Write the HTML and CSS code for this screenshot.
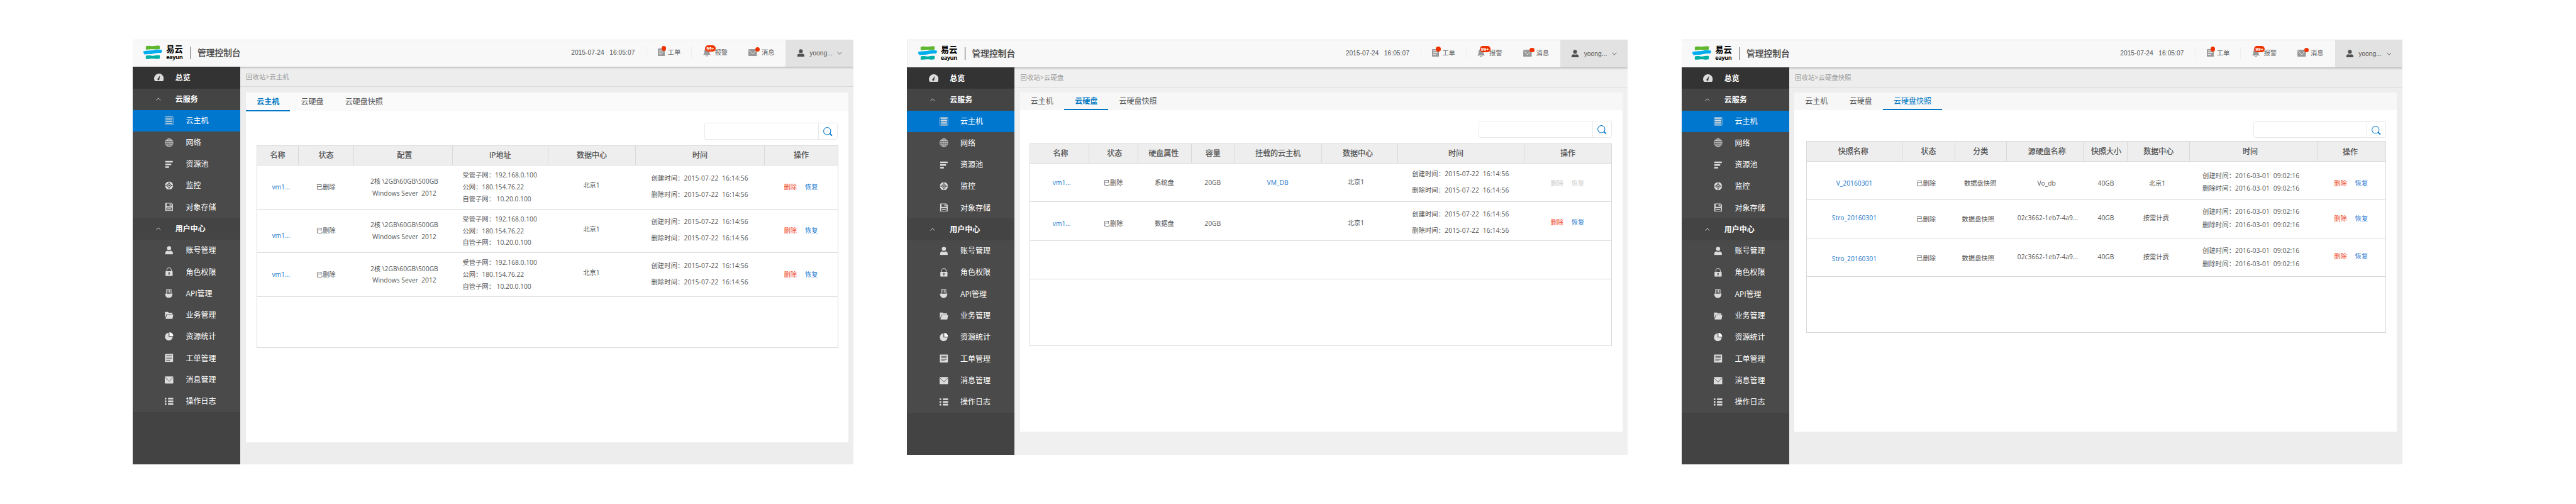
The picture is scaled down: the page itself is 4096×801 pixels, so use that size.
FILE: index.html
```
<!DOCTYPE html>
<html lang="zh-CN">
<head>
<meta charset="utf-8">
<title>易云 管理控制台</title>
<link rel="stylesheet" href="styles.css">
</head>
<body>
<svg class="defs" width="0" height="0" aria-hidden="true">
  <symbol id="logo" viewBox="0 0 35 26">
    <path fill="#5fb62f" d="M4.5 2.2C9-.4 13 1.6 18 1.3c5-.2 9-1.6 12.500-.2v5.600c-5 1.200-8 .6-12.500 .5-5-.1-9 .6-13.500 .6z"/>
    <path fill="#00aeef" d="M0 11.200c6-2.200 11-1 17-2 6-.9 12-2.200 18-.2-.3 2.500-.6 4.500-2.500 5.200-6-.8-10 .6-15.500 1.400-5.500 .9-9.500 .4-15 1.200C.5 15.500 0 13.500 0 11.200z"/>
    <path fill="#00b0a6" d="M4.500 19.500c5-1.800 9 .2 14-.1 4.500-.3 8-1.600 12-.6v5.700c-5 1.600-8 .3-13 .2-5 0-8.500 1.200-13 .6z"/>
  </symbol>
  <symbol id="gauge" viewBox="0 0 18 14"><path fill="currentColor" fill-rule="evenodd" d="M1.500 14A9 9 0 1 1 16.500 14zM11.200 2.800L7.600 8.600a1.800 1.800 0 1 0 2.200 1.200z"/></symbol>
  <symbol id="up" viewBox="0 0 9 6"><path fill="none" stroke="currentColor" d="M.4 5.400L4.500 1 8.600 5.400"/></symbol>
  <symbol id="down" viewBox="0 0 9 6"><path fill="none" stroke="currentColor" d="M.4 .6L4.500 5 8.600 .6"/></symbol>
  <symbol id="server" viewBox="0 0 16 16"><rect x=".5" y=".5" width="15" height="15" rx="1.500" fill="none" stroke="currentColor"/><path stroke="currentColor" stroke-width="1.800" stroke-linecap="round" d="M2.800 3.200h10.400M2.800 6.400h10.400M2.800 9.600h10.400M2.800 12.800h10.400"/></symbol>
  <symbol id="globe" viewBox="0 0 16 16"><g fill="none" stroke="currentColor"><circle cx="8" cy="8" r="7.400"/><ellipse cx="8" cy="8" rx="3.800" ry="7.400"/><path d="M8 .5v15M.5 8h15M1.800 4.200h12.400M1.800 11.800h12.400"/></g></symbol>
  <symbol id="pool" viewBox="0 0 16 16"><path fill="currentColor" d="M1.500 2h13a.5.5 0 0 1 .5.500v2a.5.5 0 0 1-.5.500h-13a.5.5 0 0 1-.5-.5v-2a.5.5 0 0 1 .5-.5zM1 7h11v3H1zM1 12h7v3H1z"/></symbol>
  <symbol id="monitor" viewBox="0 0 16 16"><circle cx="8" cy="8" r="5.400" fill="none" stroke="currentColor" stroke-width="4.200"/><path stroke="#4a4a4a" d="M8 0v4M8 12v4M0 8h4M12 8h4"/><path fill="currentColor" stroke="#4a4a4a" stroke-width="1.200" d="M8 3.600L12.400 8 8 12.400 3.600 8z"/><circle cx="8" cy="8" r="1.500" fill="#4a4a4a"/></symbol>
  <symbol id="disk" viewBox="0 0 16 16"><path fill="currentColor" fill-rule="evenodd" d="M2 .5h10.500L15 3v11.500a1 1 0 0 1-1 1H2a1 1 0 0 1-1-1v-13a1 1 0 0 1 1-1zM3.500 1.800v4.900h9V1.800zM3 9v5.200h10V9z"/><path fill="currentColor" d="M9 2.300h2.200v3.200H9zM4.500 10.800h7v1.600h-7z"/></symbol>
  <symbol id="user" viewBox="0 0 16 16"><circle cx="8" cy="4.200" r="3.800" fill="currentColor"/><path fill="currentColor" d="M1 15.500v-2.800c0-2.500 2.500-4 4.300-3.800 1.600.9 3.800.9 5.400 0 1.800-.2 4.300 1.300 4.300 3.800v2.800z"/></symbol>
  <symbol id="lock" viewBox="0 0 16 17"><path fill="none" stroke="currentColor" stroke-width="1.200" d="M3.600 8V5a4.400 4.400 0 0 1 8.800 0v3"/><path fill="currentColor" fill-rule="evenodd" d="M1.800 7.500h12.400a.8.8 0 0 1 .8.8v7.900a.8.8 0 0 1-.8.8H1.800a.8.8 0 0 1-.8-.8V8.300a.8.8 0 0 1 .8-.8zM8 9.600a1.600 1.600 0 0 0-.7 3V15h1.400v-2.400a1.600 1.600 0 0 0-.7-3z"/></symbol>
  <symbol id="api" viewBox="0 0 16 16"><path fill="none" stroke="currentColor" stroke-width="1.200" d="M3.200 9V.6h8.600V9M6 .6v5.400M9 .6v5.400"/><path fill="currentColor" d="M.5 8h14a7 8 0 0 1-14 0z"/></symbol>
  <symbol id="folder" viewBox="0 0 16 16"><path fill="currentColor" d="M.5 14V2h5.500l1.500 1.500H14V6H3.500z"/><path fill="currentColor" d="M4.200 6.800H16L14.200 15H1.500z"/></symbol>
  <symbol id="pie" viewBox="0 0 16 16"><path fill="currentColor" d="M7.200 1v7.600h7.600A7.200 7.200 0 1 1 7.200 1z"/><path fill="#fff" d="M8.600 0A7.200 7.200 0 0 1 15.800 7.200H8.600z"/></symbol>
  <symbol id="doc" viewBox="0 0 16 16"><path fill="currentColor" fill-rule="evenodd" d="M1.500 .5h13a1 1 0 0 1 1 1v13a1 1 0 0 1-1 1h-13a1 1 0 0 1-1-1v-13a1 1 0 0 1 1-1zM2.800 3.200v1.100h10.400V3.200zM2.800 6v1.100h10.400V6zM2.800 8.800v1.100h10.400V8.800zM2.800 11.800v1.100h7.200v-1.100z"/></symbol>
  <symbol id="mail" viewBox="0 0 16 13"><rect width="16" height="13" rx="1" fill="currentColor"/><path class="flap" fill="none" stroke-width=".9" d="M.6 1.200L8 9.300l7.400-8.100"/></symbol>
  <symbol id="list" viewBox="0 0 16 14"><path fill="currentColor" d="M0 .5h3v3H0zM0 5.500h3v3H0zM0 10.500h3v3H0zM6 .5h10v3H6zM6 5.500h10v3H6zM6 10.500h10v3H6z"/></symbol>
  <symbol id="order" viewBox="0 0 13 14"><path fill="currentColor" fill-rule="evenodd" d="M1 0h11l1 1v12a1 1 0 0 1-1 1H1a1 1 0 0 1-1-1V1zM2 2.600v1.300h8V2.600zM2 6v1.300h8V6zM2 9.500v1.300h6V9.500z"/></symbol>
  <symbol id="bell" viewBox="0 0 14 15"><path fill="currentColor" d="M7 0c3.500 0 4.700 2.800 4.700 5.500 0 3.300.8 5 2.300 6.500H0c1.500-1.500 2.300-3.200 2.300-6.500C2.300 2.800 3.500 0 7 0zM4.500 13h5A2.500 2 0 0 1 4.500 13z"/></symbol>
  <symbol id="search" viewBox="0 0 17 17"><circle cx="7.300" cy="7.300" r="6.600" fill="none" stroke="currentColor" stroke-width="1.200"/><path stroke="currentColor" stroke-width="2.200" d="M11.800 11.800l4.600 4.300"/></symbol>
</svg>

<main class="board">
  <section class="screen screen-host">
    <header class="top">
      <svg class="logo"><use href="#logo"/></svg>
      <div class="brand"><b>易云</b><i>eayun</i></div>
      <h1 class="product">管理控制台</h1>
      <time class="clock">2015-07-24   16:05:07</time>
      <a class="tool tool-order"><svg class="i-order"><use href="#order"/></svg><em class="dot"></em>工单</a>
      <a class="tool tool-bell"><svg class="i-bell"><use href="#bell"/></svg><em class="count">99+</em>报警</a>
      <a class="tool tool-mail"><svg class="i-mail"><use href="#mail"/></svg><em class="dot"></em>消息</a>
      <a class="account"><svg class="i-user"><use href="#user"/></svg>yoong...<svg class="i-down"><use href="#down"/></svg></a>
    </header>
    <div class="body">
      <nav class="side">
        <a class="home"><svg class="i-gauge"><use href="#gauge"/></svg>总览</a>
        <a class="group"><svg class="i-up"><use href="#up"/></svg>云服务</a>
        <a class="item active"><svg><use href="#server"/></svg>云主机</a>
        <a class="item"><svg><use href="#globe"/></svg>网络</a>
        <a class="item"><svg><use href="#pool"/></svg>资源池</a>
        <a class="item"><svg><use href="#monitor"/></svg>监控</a>
        <a class="item"><svg><use href="#disk"/></svg>对象存储</a>
        <a class="group"><svg class="i-up"><use href="#up"/></svg>用户中心</a>
        <a class="item"><svg><use href="#user"/></svg>账号管理</a>
        <a class="item"><svg><use href="#lock"/></svg>角色权限</a>
        <a class="item"><svg><use href="#api"/></svg>API管理</a>
        <a class="item"><svg><use href="#folder"/></svg>业务管理</a>
        <a class="item"><svg><use href="#pie"/></svg>资源统计</a>
        <a class="item"><svg><use href="#doc"/></svg>工单管理</a>
        <a class="item"><svg><use href="#mail"/></svg>消息管理</a>
        <a class="item"><svg><use href="#list"/></svg>操作日志</a>
      </nav>
      <div class="content">
        <div class="crumb">回收站&gt;云主机</div>
        <div class="card">
          <div class="tabs"><a class="tab on">云主机</a><a class="tab">云硬盘</a><a class="tab">云硬盘快照</a></div>
          <div class="search"><span class="field"></span><span class="go"><svg><use href="#search"/></svg></span></div>
          <div class="table">
            <div class="row head"><span>名称</span><span>状态</span><span class="r3">配置</span><span>IP地址</span><span>数据中心</span><span class="u1">时间</span><span>操作</span></div>
            <div class="row">
              <span class="link r6">vm1...</span><span>已删除</span>
              <span class="r3 spec"><span>2核 \2GB\60GB\500GB<br>Windows Sever&nbsp; 2012</span></span>
              <span class="ips"><span>受管子网<i class="c">：</i>192.168.0.100<br>公网<i class="c">：</i>180.154.76.22<br>自管子网<i class="c">：</i> 10.20.0.100</span></span>
              <span class="u3">北京1</span>
              <span class="when u1"><span>创建时间<i class="c">：</i>2015-07-22&nbsp; 16:14:56<br>删除时间<i class="c">：</i>2015-07-22&nbsp; 16:14:56</span></span>
              <span class="acts"><a class="del">删除</a><a class="link">恢复</a></span>
            </div>
            <div class="row">
              <span class="link r6 d9">vm1...</span><span>已删除</span>
              <span class="r3 spec"><span>2核 \2GB\60GB\500GB<br>Windows Sever&nbsp; 2012</span></span>
              <span class="ips"><span>受管子网<i class="c">：</i>192.168.0.100<br>公网<i class="c">：</i>180.154.76.22<br>自管子网<i class="c">：</i> 10.20.0.100</span></span>
              <span class="u3">北京1</span>
              <span class="when u1"><span>创建时间<i class="c">：</i>2015-07-22&nbsp; 16:14:56<br>删除时间<i class="c">：</i>2015-07-22&nbsp; 16:14:56</span></span>
              <span class="acts"><a class="del">删除</a><a class="link">恢复</a></span>
            </div>
            <div class="row">
              <span class="link r6">vm1...</span><span>已删除</span>
              <span class="r3 spec"><span>2核 \2GB\60GB\500GB<br>Windows Sever&nbsp; 2012</span></span>
              <span class="ips"><span>受管子网<i class="c">：</i>192.168.0.100<br>公网<i class="c">：</i>180.154.76.22<br>自管子网<i class="c">：</i> 10.20.0.100</span></span>
              <span class="u3">北京1</span>
              <span class="when u1"><span>创建时间<i class="c">：</i>2015-07-22&nbsp; 16:14:56<br>删除时间<i class="c">：</i>2015-07-22&nbsp; 16:14:56</span></span>
              <span class="acts"><a class="del">删除</a><a class="link">恢复</a></span>
            </div>
          </div>
        </div>
      </div>
    </div>
  </section>

  <section class="screen screen-disk">
    <header class="top">
      <svg class="logo"><use href="#logo"/></svg>
      <div class="brand"><b>易云</b><i>eayun</i></div>
      <h1 class="product">管理控制台</h1>
      <time class="clock">2015-07-24   16:05:07</time>
      <a class="tool tool-order"><svg class="i-order"><use href="#order"/></svg><em class="dot"></em>工单</a>
      <a class="tool tool-bell"><svg class="i-bell"><use href="#bell"/></svg><em class="count">99+</em>报警</a>
      <a class="tool tool-mail"><svg class="i-mail"><use href="#mail"/></svg><em class="dot"></em>消息</a>
      <a class="account"><svg class="i-user"><use href="#user"/></svg>yoong...<svg class="i-down"><use href="#down"/></svg></a>
    </header>
    <div class="body">
      <nav class="side">
        <a class="home"><svg class="i-gauge"><use href="#gauge"/></svg>总览</a>
        <a class="group"><svg class="i-up"><use href="#up"/></svg>云服务</a>
        <a class="item active"><svg><use href="#server"/></svg>云主机</a>
        <a class="item"><svg><use href="#globe"/></svg>网络</a>
        <a class="item"><svg><use href="#pool"/></svg>资源池</a>
        <a class="item"><svg><use href="#monitor"/></svg>监控</a>
        <a class="item"><svg><use href="#disk"/></svg>对象存储</a>
        <a class="group"><svg class="i-up"><use href="#up"/></svg>用户中心</a>
        <a class="item"><svg><use href="#user"/></svg>账号管理</a>
        <a class="item"><svg><use href="#lock"/></svg>角色权限</a>
        <a class="item"><svg><use href="#api"/></svg>API管理</a>
        <a class="item"><svg><use href="#folder"/></svg>业务管理</a>
        <a class="item"><svg><use href="#pie"/></svg>资源统计</a>
        <a class="item"><svg><use href="#doc"/></svg>工单管理</a>
        <a class="item"><svg><use href="#mail"/></svg>消息管理</a>
        <a class="item"><svg><use href="#list"/></svg>操作日志</a>
      </nav>
      <div class="content">
        <div class="crumb">回收站&gt;云硬盘</div>
        <div class="card">
          <div class="tabs"><a class="tab">云主机</a><a class="tab on">云硬盘</a><a class="tab">云硬盘快照</a></div>
          <div class="search"><span class="field"></span><span class="go"><svg><use href="#search"/></svg></span></div>
          <div class="table">
            <div class="row head"><span class="r2">名称</span><span class="r2">状态</span><span class="l2">硬盘属性</span><span>容量</span><span>挂载的云主机</span><span class="l3">数据中心</span><span class="l9">时间</span><span>操作</span></div>
            <div class="row">
              <span class="link r4">vm1...</span><span>已删除</span><span>系统盘</span><span>20GB</span><span class="link">VM_DB</span>
              <span class="l6 u1">北京1</span>
              <span class="when u1"><span>创建时间<i class="c">：</i>2015-07-22&nbsp; 16:14:56<br>删除时间<i class="c">：</i>2015-07-22&nbsp; 16:14:56</span></span>
              <span class="acts off d1"><a>删除</a><a>恢复</a></span>
            </div>
            <div class="row">
              <span class="link r4 d5">vm1...</span><span class="d5">已删除</span><span class="d5">数据盘</span><span class="d5">20GB</span><span></span>
              <span class="l6 d4">北京1</span>
              <span class="when d3"><span>创建时间<i class="c">：</i>2015-07-22&nbsp; 16:14:56<br>删除时间<i class="c">：</i>2015-07-22&nbsp; 16:14:56</span></span>
              <span class="acts d2"><a class="del">删除</a><a class="link">恢复</a></span>
            </div>
            <div class="row"></div>
          </div>
        </div>
      </div>
    </div>
  </section>

  <section class="screen screen-snap">
    <header class="top">
      <svg class="logo"><use href="#logo"/></svg>
      <div class="brand"><b>易云</b><i>eayun</i></div>
      <h1 class="product">管理控制台</h1>
      <time class="clock">2015-07-24   16:05:07</time>
      <a class="tool tool-order"><svg class="i-order"><use href="#order"/></svg><em class="dot"></em>工单</a>
      <a class="tool tool-bell"><svg class="i-bell"><use href="#bell"/></svg><em class="count">99+</em>报警</a>
      <a class="tool tool-mail"><svg class="i-mail"><use href="#mail"/></svg><em class="dot"></em>消息</a>
      <a class="account"><svg class="i-user"><use href="#user"/></svg>yoong...<svg class="i-down"><use href="#down"/></svg></a>
    </header>
    <div class="body">
      <nav class="side">
        <a class="home"><svg class="i-gauge"><use href="#gauge"/></svg>总览</a>
        <a class="group"><svg class="i-up"><use href="#up"/></svg>云服务</a>
        <a class="item active"><svg><use href="#server"/></svg>云主机</a>
        <a class="item"><svg><use href="#globe"/></svg>网络</a>
        <a class="item"><svg><use href="#pool"/></svg>资源池</a>
        <a class="item"><svg><use href="#monitor"/></svg>监控</a>
        <a class="item"><svg><use href="#disk"/></svg>对象存储</a>
        <a class="group"><svg class="i-up"><use href="#up"/></svg>用户中心</a>
        <a class="item"><svg><use href="#user"/></svg>账号管理</a>
        <a class="item"><svg><use href="#lock"/></svg>角色权限</a>
        <a class="item"><svg><use href="#api"/></svg>API管理</a>
        <a class="item"><svg><use href="#folder"/></svg>业务管理</a>
        <a class="item"><svg><use href="#pie"/></svg>资源统计</a>
        <a class="item"><svg><use href="#doc"/></svg>工单管理</a>
        <a class="item"><svg><use href="#mail"/></svg>消息管理</a>
        <a class="item"><svg><use href="#list"/></svg>操作日志</a>
      </nav>
      <div class="content">
        <div class="crumb">回收站&gt;云硬盘快照</div>
        <div class="card">
          <div class="tabs"><a class="tab">云主机</a><a class="tab">云硬盘</a><a class="tab on">云硬盘快照</a></div>
          <div class="search"><span class="field"></span><span class="go"><svg><use href="#search"/></svg></span></div>
          <div class="table">
            <div class="row head"><span class="l2">快照名称</span><span>状态</span><span>分类</span><span class="r4">源硬盘名称</span><span class="r2">快照大小</span><span>数据中心</span><span class="l6">时间</span><span class="l2 d1">操作</span></div>
            <div class="row">
              <span class="link d6">V_20160301</span><span class="l4 d5">已删除</span><span class="d6">数据盘快照</span><span class="r4 d5">Vo_db</span><span class="r2 d6">40GB</span><span class="l2 d6">北京1</span>
              <span class="when l4 d3"><span>创建时间<i class="c">：</i>2016-03-01&nbsp; 09:02:16<br>删除时间<i class="c">：</i>2016-03-01&nbsp; 09:02:16</span></span>
              <span class="acts d6"><a class="del">删除</a><a class="link">恢复</a></span>
            </div>
            <div class="row">
              <span class="link u1">Stro_20160301</span><span class="l4 d1">已删除</span><span class="l4 d1">数据盘快照</span><span class="r6 u1">02c3662-1eb7-4a9...</span><span class="r2 u1">40GB</span><span class="l4 u1">按需计费</span>
              <span class="when l4 u1"><span>创建时间<i class="c">：</i>2016-03-01&nbsp; 09:02:16<br>删除时间<i class="c">：</i>2016-03-01&nbsp; 09:02:16</span></span>
              <span class="acts"><a class="del">删除</a><a class="link">恢复</a></span>
            </div>
            <div class="row">
              <span class="link d4">Stro_20160301</span><span class="l4 d2">已删除</span><span class="l4 d2">数据盘快照</span><span class="r6">02c3662-1eb7-4a9...</span><span class="r2">40GB</span><span class="l4">按需计费</span>
              <span class="when l4"><span>创建时间<i class="c">：</i>2016-03-01&nbsp; 09:02:16<br>删除时间<i class="c">：</i>2016-03-01&nbsp; 09:02:16</span></span>
              <span class="acts u1"><a class="del">删除</a><a class="link">恢复</a></span>
            </div>
          </div>
        </div>
      </div>
    </div>
  </section>
</main>
</body>
</html>
```
FILE: styles.css
```
* { box-sizing: border-box; }
/* .01rem is one design pixel */
html { font-size: 85.762px; background: #fff; }
body {
  margin: 0;
  overflow: hidden;
  font: .12rem/.2rem "Open Sans", "Noto Sans CJK SC", sans-serif;
  color: #555;
}
svg { display: block; flex: none; overflow: hidden; }
.defs { position: absolute; }
.c { font-style: normal; font-family: "Noto Sans CJK TC", sans-serif; line-height: 1; }

.board {
  display: flex;
  align-items: flex-start;
  gap: 1rem;
  padding: .74rem 0 0 2.46rem;
  height: 801px;
}
.screen { display: flex; flex-direction: column; width: 13.36rem; height: 7.87rem; flex: none; background: #ededed; }
.screen-disk { height: 7.69rem; background: #f0f0f0; }

/* header */
.top {
  display: flex;
  align-items: center;
  flex: none;
  height: .5rem;
  padding-left: .2rem;
  background: #f8f8f8;
  box-shadow: 0 1px .04rem rgba(0, 0, 0, .3);
  clip-path: inset(0 0 -.06rem 0);
  z-index: 1;
}
.screen-disk .top, .screen-snap .top { height: .51rem; border-top: 1px solid #d2d2d2; }
.logo { width: .35rem; height: .26rem; margin-bottom: .03rem; }
.brand { width: .45rem; height: .32rem; margin-left: .07rem; color: #000; white-space: nowrap; }
.brand b { display: block; font: 700 .155rem/.17rem "Noto Sans CJK SC", sans-serif; }
.brand i { display: block; font: 700 .108rem/.13rem "Open Sans", sans-serif; letter-spacing: -.0055rem; margin-top: -.01rem; }
.product {
  margin: 0 0 .02rem;
  padding-left: .12rem;
  width: 7.06rem;
  border-left: 1px solid #333;
  font: 500 .16rem/.23rem "Noto Sans CJK SC", sans-serif;
  color: #4a4a4a;
  -webkit-text-stroke: .2px #4a4a4a;
}
.clock { width: 1.39rem; font: .12rem/.2rem "Liberation Sans", sans-serif; white-space: pre; margin-bottom: .04rem; }
.tool { position: relative; display: flex; align-items: center; height: .22rem; margin-bottom: .04rem; color: #666; }
.tool svg { color: #999; --flap: #f8f8f8; }
.tool-order { width: .84rem; padding-left: .2rem; border-left: 1px solid #efefef; }
.tool-bell { width: .9rem; padding-left: .2rem; border-left: 1px solid #efefef; }
.tool-mail { width: .85rem; padding-left: .16rem; }
.i-order { width: .13rem; height: .14rem; margin-right: .06rem; }
.i-bell { width: .14rem; height: .15rem; margin-right: .08rem; }
.i-mail { width: .16rem; height: .13rem; margin: .02rem .08rem 0 0; }
.dot { position: absolute; top: -.01rem; width: .09rem; height: .09rem; border-radius: 50%; background: #ee3300; }
.tool-order .dot { left: .27rem; }
.tool-mail .dot { left: .28rem; top: .01rem; }
.count {
  position: absolute; left: .24rem; top: -.02rem; width: .2rem; height: .12rem; border-radius: .06rem;
  background: #ee3300; color: #fff; font: 700 .085rem/.12rem "Open Sans", sans-serif; text-align: center;
}
.account {
  display: flex; align-items: center; align-self: stretch;
  width: 1.25rem; padding-left: .2rem; background: #e2e2e2;
  font: .12rem/.2rem "Liberation Sans", sans-serif; color: #555;
}
.i-user { width: .15rem; height: .15rem; margin: 0 .09rem .02rem 0; color: #505050; }
.i-down { width: .09rem; height: .06rem; margin-left: .09rem; }

/* navigation */
.body { display: flex; flex: 1; min-height: 0; }
.side { display: flex; flex-direction: column; flex: none; width: 1.99rem; background: #434343; z-index: 2; font-size: .14rem; color: #fff; }
.side a { display: flex; align-items: center; height: .4rem; flex: none; white-space: nowrap; }
.side svg { color: #dcdcdc; --flap: #4a4a4a; }
.home { padding-left: .4rem; background: #333; font-weight: 700; }
.group { padding-left: .43rem; background: #444; font-weight: 700; }
.item { padding-left: .6rem; background: #4a4a4a; }
.item svg { width: .16rem; height: .16rem; margin-right: .225rem; }
.item.active { background: #0077cf; }
.i-gauge { width: .18rem; height: .14rem; margin-right: .21rem; }
.i-up { width: .09rem; height: .06rem; margin-right: .27rem; }
.flap { stroke: var(--flap); }

/* page body */
.content { flex: 1; min-width: 0; }
.crumb { height: .37rem; padding: .09rem 0 0 .11rem; border-bottom: 1px solid #d9d9d9; color: #999; letter-spacing: .002rem; }
.card { margin: .1rem .09rem 0 .11rem; height: 6.49rem; background: #fff; }
.screen-disk .card, .screen-snap .card { margin: .1rem .1rem 0; height: 6.28rem; }
.tabs { display: flex; height: .36rem; background: #fafafa; font-size: .14rem; }
.screen-disk .tabs, .screen-snap .tabs { height: .32rem; background: #f7f7f7; }
.tab { display: flex; align-items: center; padding: .02rem .2rem 0; height: 100%; border-bottom: 2px solid transparent; }
.screen-disk .tab, .screen-snap .tab { padding-top: .01rem; }
.tab.on { border-color: #0077c4; color: #0077c4; font-weight: 700; }
.screen-snap .tab.on { font-weight: 400; }
.search { display: flex; width: 2.47rem; height: .31rem; margin: .205rem .195rem 0 auto; border: 1px solid #e8e8e8; border-radius: .04rem; }
.field { flex: 1; border-right: 1px solid #e8e8e8; }
.go { width: .34rem; padding: .07rem 0 0 .08rem; color: #0077cf; }
.go svg { width: .17rem; height: .17rem; }
.screen-disk .search { margin-top: .2rem; }
.screen-snap .search { margin-top: .21rem; }

/* tables */
.table { margin: .105rem 0 0 .195rem; width: 10.79rem; height: 3.76rem; border: 1px solid #d9d9d9; }
.screen-disk .table { margin-left: .183rem; }
.screen-snap .table { margin: .055rem 0 0 .214rem; width: 10.75rem; height: 3.55rem; }
.row { display: grid; border-bottom: 1px solid #d9d9d9; }
.screen-host .row { grid-template-columns: .765rem 1.02rem 1.83rem 1.77rem 1.63rem 2.385rem 1fr; height: .81rem; }
.screen-disk .row { grid-template-columns: 1.08rem .91rem .99rem .8rem 1.61rem 1.41rem 2.35rem 1fr; height: .713rem; }
.screen-snap .row { grid-template-columns: 1.77rem .97rem .96rem 1.42rem .82rem 1.16rem 2.36rem 1fr; height: .71rem; }
.row > span { display: flex; align-items: center; justify-content: center; text-align: center; white-space: nowrap; }
.screen .head { height: .37rem; background: #eee; font-size: .14rem; color: #4a4a4a; -webkit-text-stroke: .2px #4a4a4a; }
.head > span + span { border-left: 1px solid #d9d9d9; }
.link { color: #1b78d0; }
.del { color: #f0492b; }
.spec, .ips { line-height: .22rem; }
.row > .ips { justify-content: flex-start; text-align: left; padding-left: .195rem; }
.when { line-height: .3rem; letter-spacing: .0015rem; }
.screen-snap .when { line-height: .24rem; }
.acts { gap: .15rem; }
.off { color: #ccc; }

/* optical adjustments of cell text: u/d/l/r = shift in design pixels */
.u1 { padding-bottom: .02rem; }
.u3 { padding-bottom: .06rem; }
.d1 { padding-top: .02rem; }
.d2 { padding-top: .04rem; }
.d3 { padding-top: .06rem; }
.d4 { padding-top: .08rem; }
.d5 { padding-top: .1rem; }
.d6 { padding-top: .12rem; }
.d9 { padding-top: .18rem; }
.l2 { padding-right: .04rem; }
.l3 { padding-right: .06rem; }
.l4 { padding-right: .08rem; }
.l6 { padding-right: .12rem; }
.l9 { padding-right: .18rem; }
.r2 { padding-left: .04rem; }
.r3 { padding-left: .06rem; }
.r4 { padding-left: .08rem; }
.r6 { padding-left: .12rem; }
```
